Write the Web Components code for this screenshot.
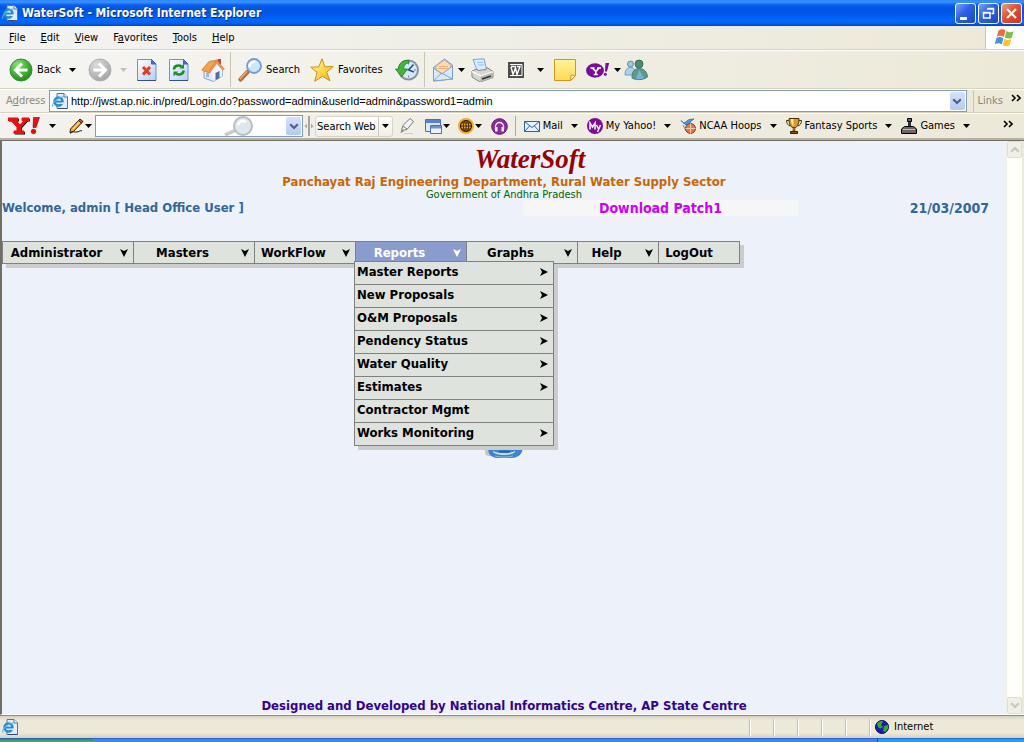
<!DOCTYPE html>
<html lang="en">
<head>
<meta charset="utf-8">
<title>WaterSoft - Microsoft Internet Explorer</title>
<style>
  html, body { margin: 0; height: 100%; }
  body { font: 11px/14px "DejaVu Sans Condensed", "DejaVu Sans", sans-serif; color: #000; background: #ece9d8; overflow: hidden; }
</style>
</head>
<body>
<browser-window></browser-window>
<script>
const PAGE_ICON = '<path d="M5 .5h7l3.500 3.500v11.500H5z" fill="#e4ecfb" stroke="#5670a8"/><path d="M12 .5V4h3.500" fill="#fff" stroke="#5670a8"/><path d="M6 15.500h9.500" stroke="#334a86"/><circle cx="6.500" cy="8.500" r="4" fill="#dff2ff" stroke="#2489d6" stroke-width="2.400"/><path d="M3 8.600h7.500" stroke="#2489d6" stroke-width="2"/><path d="M8.500 10.300h3.500" stroke="#e4ecfb" stroke-width="1.600"/><path d="M1 13.500C-.5 11 4 5 12.500 3.500" fill="none" stroke="#55b4ee" stroke-width="1.200"/>';
const ICONS = {
  page: [16, 16, PAGE_ICON],
  back: [24, 24, '<defs><radialGradient id="g" cx=".35" cy=".25" r=".9"><stop offset="0" stop-color="#8fe07a"/><stop offset=".5" stop-color="#3cb52f"/><stop offset="1" stop-color="#1d7d16"/></radialGradient></defs><circle cx="12" cy="12" r="11" fill="url(#g)" stroke="#2f8f2a"/><path d="M13 5.500 6.500 12l6.500 6.500M7 12h11.500" fill="none" stroke="#fff" stroke-width="3"/>'],
  forward: [24, 24, '<defs><radialGradient id="g" cx=".35" cy=".25" r=".9"><stop offset="0" stop-color="#dcdcdc"/><stop offset="1" stop-color="#9c9c9c"/></radialGradient></defs><circle cx="12" cy="12" r="11" fill="url(#g)" stroke="#b0b0b0"/><path d="m11 5.500 6.500 6.500-6.500 6.500M17 12H5.500" fill="none" stroke="#fff" stroke-width="3"/>'],
  stop: [20, 24, '<defs><linearGradient id="g" x2="1" y2="1"><stop offset="0" stop-color="#fff"/><stop offset="1" stop-color="#b4cdfa"/></linearGradient></defs><path d="M.5 1.500h14l4.500 4.500v16.500H.5z" fill="url(#g)" stroke="#6f8fd6"/><path d="M14.500 1.500V6H19z" fill="#3f6fc8" stroke="#3f66b4"/><path d="M.5 22.500H19" stroke="#34508f"/><path d="m6 9 7 7.500M13 9l-7 7.500" stroke="#ee3a12" stroke-width="3"/>'],
  refresh: [20, 24, '<defs><linearGradient id="g" x2="1" y2="1"><stop offset="0" stop-color="#fff"/><stop offset="1" stop-color="#b4cdfa"/></linearGradient></defs><path d="M.5 1.500h14l4.500 4.500v16.500H.5z" fill="url(#g)" stroke="#6f8fd6"/><path d="M14.500 1.500V6H19z" fill="#3f6fc8" stroke="#3f66b4"/><path d="M.5 22.500H19" stroke="#34508f"/><path d="M5 11.500c0-4 5-5 7.500-3M14.500 12.500c0 4-5 5-7.500 3" fill="none" stroke="#159021" stroke-width="2.600"/><path d="M10.500 10.500h4.500V5.500zM9 13.500H4.500v5z" fill="#159021"/>'],
  home: [24, 24, '<path d="M3 12v8l9.500 3.500 9-5.500V10L15 4z" fill="#dfeafc" stroke="#86a3cc"/><path d="M12.500 13.500v10l9-5.500v-7L17 6z" fill="#c4d7f6"/><path d="M16.500 1h3.500v6l-3.500-2z" fill="#c8452e"/><path d="M.8 12 8 3.500 16 2l-6.500 9-1.200 4z" fill="#f7a04a" stroke="#d47a2c" stroke-width=".8"/><path d="M16 2.500 23.500 11l-2 1.200L15.800 5.600 9.500 14.500l-1.200-.6z" fill="#ee9a48" stroke="#cc7a36" stroke-width=".5"/><path d="m10 14 5.800-8 5.200 6v6l-8.500 5z" fill="#eef4ff"/><path d="M14.500 15 18.500 13v7l-4 2.300z" fill="#4a6ea8"/><path d="M5 15h3v4H5z" fill="#9db8e5"/>'],
  search: [24, 24, '<path d="m2.500 21.500 7-7.500" stroke="#b26a36" stroke-width="4.200" stroke-linecap="round"/><path d="m2.300 20.700 6.500-7" stroke="#f0a878" stroke-width="1.500" stroke-linecap="round"/><circle cx="16" cy="8" r="7" fill="#c8e9fd" stroke="#7a9ad6" stroke-width="1.800"/><path d="M11.500 9c0-4 3-5.500 6-5" stroke="#fff" stroke-width="2.400" fill="none"/>'],
  star: [24, 24, '<defs><linearGradient id="g" x2="1" y2="1"><stop offset="0" stop-color="#fff6a8"/><stop offset=".6" stop-color="#ffd23a"/><stop offset="1" stop-color="#eea310"/></linearGradient></defs><path d="m12 .8 2.800 8 8.400-.3-6.500 5.700 3.300 8.600-7.500-4.500-7.800 5 2.400-9L.8 9.200l8-.3z" fill="url(#g)" stroke="#c98f1c" stroke-linejoin="round"/>'],
  history: [24, 24, '<circle cx="13.500" cy="12" r="9.500" fill="#d3e9fb" stroke="#8b949e" stroke-width="2"/><path d="M13.500 4.500v2M13.500 17.500v2M19 12h2" stroke="#6b87a8"/><path d="m18.500 6.500-5 5.500 5.500 2" fill="none" stroke="#2b4f86" stroke-width="1.600"/><path d="M14 2.500C8.500 1.500 3.500 5 3.500 11H.5l6 8 6-8H8.800c-.3-3.500 2-6 5.200-6z" fill="#3fb53a" stroke="#207a25" stroke-width=".8"/>'],
  envelope: [22, 24, '<path d="m1.500 9.500 11-8.500L20.500 7v14L1.500 23z" fill="#a9caf8" stroke="#7a9bdd"/><path d="M4 8 12.500 2l6 5v6l-7.500 3L4 12z" fill="#ffdcae" stroke="#e8aa66"/><path d="M7 8.500h9M6 10.500h10" stroke="#e5b27c"/><path d="m1.500 10 8.500 6 10.500-8v13L1.500 23z" fill="#d9eaff" stroke="#7a9bdd"/><path d="m1.500 23 8-8 11 6" fill="none" stroke="#7a9bdd"/>'],
  printer: [24, 24, '<path d="M3 1.500 14 .8l2.500 11-9 2z" fill="#d8ecff" stroke="#7aa3da"/><path d="M7 4.500h6M8 7h6" stroke="#9dbfe8"/><path d="m2 13 5-2 1 1.500 8-1 1-2 6 4v6l-13 4.500L2 19z" fill="#d6d6d4" stroke="#84847f"/><path d="m2 13.500 8.500 4.500L23 14" fill="none" stroke="#f8f8f6" stroke-width="1.500"/><path d="m10.500 18.500 12-4v5l-12 4.500z" fill="#b8b8b4"/><path d="m12 21 9-3" stroke="#333" stroke-width="1.500"/>'],
  word: [17, 18, '<path d="M0 1h16v16H0z" fill="#4b4b4b"/><path d="M3 5.500h4.500M3 6l2 7.500L7.500 7l1.500 6.500 3-8H9" fill="none" stroke="#fff" stroke-width="1.400"/><path d="M2 3.500h12v11H2" fill="none" stroke="#fff"/>'],
  note: [22, 24, '<defs><linearGradient id="g" x2="0" y2="1"><stop offset="0" stop-color="#fff29a"/><stop offset="1" stop-color="#ffd957"/></linearGradient></defs><path d="M.5 1.500h21v16l-4.500 5H.5z" fill="url(#g)" stroke="#cf9a1c"/><path d="m16.500 22.500.5-5.500 4.500.5z" fill="#fff6bd" stroke="#cf9a1c"/>'],
  messenger: [24, 18, '<ellipse cx="9" cy="9.500" rx="9" ry="7.200" fill="#7b0b9c"/><path d="M4.500 7h4M11 7h4M6.500 7l3.300 3.500L13 7M9.800 10v3.500M7.800 13.500h4" stroke="#fff" stroke-width="1.700" fill="none"/><path d="M19.500 2h3.700l-2.200 8.500h-2z" fill="#7b0b9c"/><circle cx="19.300" cy="13.300" r="1.500" fill="#7b0b9c"/>'],
  people: [24, 24, '<circle cx="6.500" cy="6" r="3" fill="#9fc8d9" stroke="#5c91aa"/><path d="M1 17c0-5 2-7.500 5.500-7.500S12 12 12 17z" fill="#a9d2e8" stroke="#6c9fbb"/><circle cx="15" cy="6" r="4" fill="#4d8a74" stroke="#39735d"/><path d="M8 20c0-6 2-9.500 7-9.500 5 0 8 3 8.500 8.500-4 3-11 3.500-15.500 1z" fill="#5b9d83" stroke="#45818a"/><path d="m15 12-3 9c4 .5 6 0 8-1z" fill="#7ab0de"/>'],
  flag: [22, 20, '<path d="M4.500 2.500c3-2 5-1.500 7 0L9.800 9C7.500 7.500 5 7.500 2.700 8.700z" fill="#f26a3a"/><path d="M12.500 3c2.500 1.500 4.500 1.500 7 .3L17.700 10c-2.500 1-4.500.7-7-.5z" fill="#7fc041"/><path d="M2.400 10c2.500-1.500 4.700-1 7 .3L7.800 16.500C5.500 15 3 15 .7 16.300z" fill="#4a8fe0"/><path d="M10.400 10.800c2.500 1.500 4.500 1.500 7 .3l-1.900 6.600c-2.500 1-4.500.7-6.800-.5z" fill="#fbc630"/>'],
  yahoo: [32, 20, '<path d="M0 2h10v2.500H8L12 9l4-4.500h-2V2h7v2.500h-2l-6 6.500v4h3v2.500H6V15h3v-4L3 4.500H0z" fill="#000" transform="translate(1 1)"/><path d="M0 2h10v2.500H8L12 9l4-4.500h-2V2h7v2.500h-2l-6 6.500v4h3v2.500H6V15h3v-4L3 4.500H0z" fill="#f00d0d" stroke="#f00d0d"/><path d="M25.500 1.500h6l-3.500 10h-3z" fill="#f00d0d" stroke="#400" stroke-width=".5"/><circle cx="25.500" cy="15.500" r="2.300" fill="#f00d0d" stroke="#400" stroke-width=".5"/>'],
  pencil: [16, 16, '<path d="m1.500 11 8-8.500 3 2.500-8 8.500-3.500 1z" fill="#f7b12a" stroke="#302000"/><path d="m9.500 2.500 1.500-1.500 3 2.500-1.500 1.500z" fill="#e05043" stroke="#302000"/><path d="M1 15.500c3-3 4-1 7-1.500s3-2 5-1" stroke="#111" fill="none"/><path d="m4 11 6.500-7" stroke="#ffe9a0"/>'],
  marker: [16, 18, '<path d="m2.500 13.500 1.500-5 7-7 3.500 3-6.500 8z" fill="#f4f4f4" stroke="#777"/><path d="m4 9 4 3" stroke="#777"/><path d="m1 16 2-2.500 2 1z" fill="#777"/><path d="M5 16.500h9" stroke="#ccc"/>'],
  windows: [17, 16, '<path d="M.5 1.500h15v12H.5z" fill="#dfe7fb" stroke="#506cb2"/><path d="M1 2h14v3H1z" fill="#5f80d0"/><path d="M5.500 7.500h11v8h-11z" fill="#edf2ff" stroke="#506cb2"/><path d="M6 8h10v2.500H6z" fill="#6f8fd8"/>'],
  globe: [16, 16, '<circle cx="8" cy="8" r="8" fill="#f3ae1c"/><circle cx="8" cy="8" r="5.500" fill="none" stroke="#2e1d00" stroke-width="1.200"/><path d="M8 2v12M2.500 8h11M3.500 5h9M3.500 11h9" stroke="#2e1d00" stroke-width=".9"/><ellipse cx="8" cy="8" rx="2.700" ry="5.500" fill="none" stroke="#2e1d00" stroke-width=".9"/>'],
  music: [17, 17, '<circle cx="8.500" cy="8.500" r="7.800" fill="#8a2a9e" stroke="#5d1670"/><path d="M4.500 11V8.500a4 4 0 0 1 8 0V11" fill="none" stroke="#fff" stroke-width="1.300"/><path d="M4 9h2.500v4.500H4zM10.500 9H13v4.500h-2.500z" fill="#fff"/>'],
  mail: [16, 16, '<path d="M.5 3.500h15v10H.5z" fill="#e6f2ff" stroke="#2c62a8"/><path d="m.5 3.500 7.500 6 7.500-6M.5 13.500l5-5.500M15.500 13.500l-5-5.500" fill="none" stroke="#2c62a8"/>'],
  my: [16, 16, '<circle cx="8" cy="8" r="8" fill="#7b0b9c"/><path d="M3 11.500V5l2.500 4L8 5v6.500M9.500 7l2 4M13.500 7l-3 7" fill="none" stroke="#fff" stroke-width="1.500"/>'],
  hoops: [16, 16, '<path d="M1 2.500 4 5l5-3.500 5-.5-4 3 1 3-6-.5z" fill="#4a97e0" stroke="#2161a8" stroke-width=".7"/><path d="m3 7 3 6" stroke="#6a8fb8"/><circle cx="10.500" cy="10.500" r="5" fill="#e07a45" stroke="#8f3a16"/><path d="M5.500 10.500h10M10.500 5.500v10" stroke="#f5c7ab"/>'],
  trophy: [16, 16, '<path d="M3.500 2.500h-3c0 3 1.500 5 4 5.500M12.500 2.500h3c0 3-1.500 5-4 5.500" fill="none" stroke="#4a3205"/><path d="M3 .5h10c0 5-1 7.500-3.500 9h-3C4 8 3 5.500 3 .5z" fill="#d59b25" stroke="#4a3205"/><path d="M5 1c0 4 1 6 2.500 7.500V1z" fill="#ffe89b"/><path d="M7 9.500h2V13H7z" fill="#b77b12" stroke="#4a3205" stroke-width=".5"/><path d="M4.500 13.500h7v2h-7z" fill="#8c5a14" stroke="#2e1c00"/>'],
  joystick: [16, 16, '<path d="M7 1h3v8H7z" fill="#333"/><path d="M6.500.500h4v3h-4z" fill="#666" stroke="#000"/><path d="m.5 11 3-2.500h9l3 2.500v4.500H.5z" fill="#666" stroke="#000"/><path d="M2 11.500h12" stroke="#bbb"/><path d="M6 13.500h2M10 13.500h2" stroke="#f33" stroke-width="1.500"/>'],
  lens: [30, 20, '<path d="m1 19 10-4.500" stroke="#c9c9c9" stroke-width="3.500"/><circle cx="19" cy="10" r="9" fill="#dde8ee" stroke="#b9bdc0" stroke-width="2"/><path d="M14 9c1-4 5-5 8-3" stroke="#fff" stroke-width="2.400" fill="none"/>'],
  grip: [10, 20, '<path d="M5 0v20" stroke="#8c8a80" stroke-width="1.500"/><path d="M3 7.500v5L.5 10zM7 7.500v5L9.500 10z" fill="#aaa89c"/>'],
  earth: [14, 14, '<circle cx="7" cy="7" r="6.500" fill="#1717c8" stroke="#101040"/><path d="M2 4c2-3 5-3.500 6-2.500L6 5l2 2-3 1.500L3 7zM9 6l4-1 .3 3-2.800 4L8 11z" fill="#2fae2f"/>'],
  water: [38, 22, '<path d="M0 12h12v8H5c-3 0-5-1-5-4z" fill="#c3c7c0"/><path d="M3 12h35c-1 6-4 9-10 10H11c-5-1-8-4-8-10z" fill="#3d84cc"/><path d="M8 15c5 3 17 3 22 0v1c-4 4-18 4-22 0z" fill="#d7e7f3"/><path d="M14 15.500h11" stroke="#2c62a8" stroke-width="2"/><path d="M10 20c5 1.500 13 1.500 18 0" fill="none" stroke="#8fbbe6"/>'],
  caret: [7, 4, '<path d="M0 0h7L3.500 4z" fill="currentColor"/>'],
  chevrons: [10, 8, '<path d="m1 1 3 3-3 3M6 1l3 3-3 3" fill="none" stroke="currentColor" stroke-width="1.600"/>'],
  chevron: [10, 7, '<path d="m1.200 1.200 3.800 3.800 3.800-3.800" fill="none" stroke="currentColor" stroke-width="2.200"/>'],
  up: [10, 7, '<path d="m1.200 5.800 3.800-3.800 3.800 3.800" fill="none" stroke="currentColor" stroke-width="2.200"/>'],
  down: [8, 8, '<path d="m0 0 4 2 4-2-4 8z" fill="currentColor"/>'],
  right: [8, 8, '<path d="m0 0 8 4-8 4 2-4z" fill="currentColor"/>'],
  minimize: [19, 19, '<path d="M4 13h7v3H4z" fill="#fff"/>'],
  restore: [19, 19, '<path d="M8.500 4.500h6v5h-2M8 5h7" fill="none" stroke="#fff" stroke-width="1.500"/><path d="M4.500 8.500h6.500v5.500H4.500zM4 9h7" fill="none" stroke="#fff" stroke-width="1.500"/>'],
  close: [19, 19, '<path d="m5 5 9 9M14 5l-9 9" stroke="#fff" stroke-width="2.200"/>']
};
const RESET = ':host{box-sizing:border-box}*{box-sizing:border-box}button{font:inherit;color:inherit;background:none;border:0;margin:0;padding:0;text-align:left;white-space:nowrap}';
const define = (name, markup) => customElements.define(name, class extends HTMLElement {
  connectedCallback() {
    if (this.shadowRoot) return;
    const template = document.createElement('template');
    template.innerHTML = `<style>${RESET}</style>` + (typeof markup === 'function' ? markup(this) : markup);
    this.attachShadow({ mode: 'open' }).append(template.content.cloneNode(true));
  }
});

define('ui-icon', el => {
  const [w, h, art] = ICONS[el.getAttribute('name')];
  return `<style>:host{display:block;flex:none}svg{display:block}</style><svg width="${w}" height="${h}" viewBox="0 0 ${w} ${h}" aria-hidden="true">${art}</svg>`;
});

define('window-button', el => `<style>
  :host{display:block}
  button{display:block;padding:0;border:1px solid #fff;border-radius:3px;background:linear-gradient(135deg,#7ba0f5,#2c60e4 45%,#1a48cc)}
  :host([kind=close]) button{background:linear-gradient(135deg,#f0a088,#e0512c 45%,#c8371a)}
  </style><button aria-label="${el.getAttribute('kind')}"><ui-icon name="${el.getAttribute('kind')}"></ui-icon></button>`);

define('title-bar', `<style>
  :host{display:flex;align-items:center;height:26px;padding:0 2px;gap:4px;color:#fff;
    background:linear-gradient(#2a86fb,#3b94ff 2px,#0a5ef0 5px,#0054e3 9px,#0058ea 14px,#0068ff 20px,#0064fa 23px,#0041c8)}
  h1{flex:1;margin:0;font:bold 12px/16px "DejaVu Sans Condensed","DejaVu Sans",sans-serif;text-shadow:1px 1px #0a2a86}
  div{display:flex;gap:2px}
  </style><ui-icon name="page"></ui-icon><h1><slot></slot></h1>
  <div><window-button kind="minimize"></window-button><window-button kind="restore"></window-button><window-button kind="close"></window-button></div>`);

define('menu-strip', `<style>
  :host{display:flex;height:24px;border-bottom:1px solid #d6d2bd;background:linear-gradient(90deg,#f3f3f1,#ece9d8)}
  nav{flex:1;display:flex;align-items:center;gap:15px;padding-left:9px}
  span{display:flex;align-items:center;justify-content:center;width:39px;border-left:1px solid #c9c5b0;background:#fff}
  </style><nav><button><u>F</u>ile</button><button><u>E</u>dit</button><button><u>V</u>iew</button><button>F<u>a</u>vorites</button><button><u>T</u>ools</button><button><u>H</u>elp</button></nav>
  <span><ui-icon name="flag"></ui-icon></span>`);

/* A toolbar command: icon, optional label, optional drop-down caret. */
define('tool-button', el => `<style>
  :host{display:block;flex:none;height:100%}
  button{display:flex;align-items:center;gap:4px;width:100%;height:100%;padding-left:5px}
  .caret{margin-left:var(--caret-gap,0px)}
  :host([off]) .caret{color:#c4c2b8}
  </style><button aria-label="${el.getAttribute('icon')}"><ui-icon name="${el.getAttribute('icon')}"></ui-icon><slot></slot>${el.hasAttribute('menu') ? '<ui-icon class="caret" name="caret"></ui-icon>' : ''}</button>`);

define('tool-bar', `<style>
  :host{display:flex;align-items:center;height:39px;padding-left:4px;border-top:1px solid #fff;border-bottom:1px solid #d6d2bd;background:linear-gradient(90deg,#f5f5f3,#ece9d8)}
  i{flex:none;width:1px;height:35px;margin:0 2px;background:#c9c5b0}
  .s{width:32px}.l{width:38px}
  .back{width:79px;--caret-gap:4px}.forward{width:49px;--caret-gap:4px}.word{width:46px;--caret-gap:8px}.search{width:72px}.fav{width:85px}
  </style>
  <tool-button class="back" icon="back" menu>Back</tool-button>
  <tool-button class="forward" icon="forward" menu off></tool-button>
  <tool-button class="s" icon="stop"></tool-button>
  <tool-button class="s" icon="refresh"></tool-button>
  <tool-button class="s" icon="home"></tool-button><i></i>
  <tool-button class="search" icon="search">Search</tool-button>
  <tool-button class="fav" icon="star">Favorites</tool-button>
  <tool-button class="s" icon="history"></tool-button><i></i>
  <tool-button class="l" icon="envelope" menu></tool-button>
  <tool-button class="l" icon="printer"></tool-button>
  <tool-button class="word" icon="word" menu></tool-button>
  <tool-button class="s" icon="note"></tool-button>
  <tool-button class="l" icon="messenger" menu></tool-button>
  <tool-button class="s" icon="people"></tool-button>`);

const DROP = '.drop{display:flex;flex:none;align-items:center;justify-content:center;width:15px;height:18px;border-radius:2px;background:linear-gradient(#d5e2fd,#b5c9f5);color:#4d6185}';

define('address-bar', `<style>${DROP}
  :host{display:flex;align-items:center;height:24px;padding:0 3px 0 6px;border-top:1px solid #fff;border-bottom:1px solid #d6d2bd;background:linear-gradient(90deg,#f3f2ee,#ece9d8)}
  label,.links{color:#8a8879}
  label{width:43px}
  .box{flex:1;display:flex;align-items:center;gap:3px;height:22px;padding:0 1px 0 2px;border:1px solid #7f9db9;background:#fff}
  input{flex:1;min-width:0;height:18px;padding:0;border:0;outline:0;background:none;font:11px "Liberation Sans",sans-serif;color:#000}
  .links{display:flex;gap:8px;height:22px;margin-left:6px;padding:4px 0 0 4px;border-left:1px solid #c9c5b0}
  .links ui-icon{color:#000}
  </style><label for="url">A<u>d</u>dress</label>
  <div class="box"><ui-icon name="page"></ui-icon><input id="url" value="http://jwst.ap.nic.in/pred/Login.do?password=admin&amp;userId=admin&amp;password1=admin"><button class="drop" aria-label="History"><ui-icon name="chevron"></ui-icon></button></div>
  <button class="links">Links<ui-icon name="chevrons"></ui-icon></button>`);

/* A bookmark on the Yahoo bar. */
define('quick-link', el => `<style>
  :host{display:block;flex:none}
  button{display:flex;align-items:center;gap:3px}
  .caret{margin-left:5px}
  </style><button><ui-icon name="${el.getAttribute('icon')}"></ui-icon><slot></slot><ui-icon class="caret" name="caret"></ui-icon></button>`);

define('yahoo-bar', `<style>${DROP}
  :host{display:flex;align-items:center;height:27px;padding-right:11px;border-top:1px solid #fff;border-bottom:2px solid #b5b2a2;background:linear-gradient(90deg,#f3f2ee,#ece9d8)}
  button{display:flex;align-items:center;flex:none}
  .logo{gap:9px;width:61px;margin-left:8px}
  .edit{width:26px}
  .find{display:flex;align-items:center;width:208px;height:22px;padding-right:1px;border:1px solid #7f9db9;background:#fff;overflow:hidden}
  .find input{flex:1;min-width:0;border:0;outline:0;background:none;font:inherit}
  .find ui-icon[name=lens]{margin-right:32px}
  .grip{margin:0 1px}
  .go{height:21px;border:1px solid #d8d4c4;border-radius:3px;background:linear-gradient(#fff,#f1efe6)}
  .go span{padding:3px 2px 2px 1px;border-right:1px solid #d0ccba}
  .go ui-icon{margin:0 3px}
  .tools{display:flex;align-items:center;margin-left:6px}
  .tools button{gap:1px;width:33px}
  .tools button:first-child{width:26px}
  .tools button:last-child{width:24px}
  .sep{flex:none;width:1px;height:20px;margin-right:8px;background:#aca899}
  .links{flex:1;display:flex;gap:9px}
  .more{padding-bottom:5px}
  </style>
  <button class="logo" aria-label="Yahoo"><ui-icon name="yahoo"></ui-icon><ui-icon name="caret"></ui-icon></button>
  <button class="edit" aria-label="Edit"><ui-icon name="pencil"></ui-icon><ui-icon name="caret"></ui-icon></button>
  <div class="find"><input aria-label="Search the Web"><ui-icon name="lens"></ui-icon><button class="drop" aria-label="Recent searches"><ui-icon name="chevron"></ui-icon></button></div>
  <ui-icon class="grip" name="grip"></ui-icon>
  <button class="go"><span>Search Web</span><ui-icon name="caret"></ui-icon></button>
  <div class="tools"><button aria-label="Highlight"><ui-icon name="marker"></ui-icon></button><button aria-label="Pop-ups"><ui-icon name="windows"></ui-icon><ui-icon name="caret"></ui-icon></button><button aria-label="Protection"><ui-icon name="globe"></ui-icon><ui-icon name="caret"></ui-icon></button><button aria-label="Music"><ui-icon name="music"></ui-icon></button></div>
  <i class="sep"></i>
  <div class="links"><quick-link icon="mail">Mail</quick-link><quick-link icon="my">My Yahoo!</quick-link><quick-link icon="hoops">NCAA Hoops</quick-link><quick-link icon="trophy">Fantasy Sports</quick-link><quick-link icon="joystick">Games</quick-link></div>
  <button class="more" aria-label="More"><ui-icon name="chevrons"></ui-icon></button>`);

define('menu-tab', el => `<style>
  :host{display:block;position:relative;border-right:1px solid #808080;background:#dee3de}
  :host([open]){background:#8a9ccd;color:#fff}
  .tab{display:flex;align-items:center;width:100%;height:21px;padding-right:5px}
  .tab span{flex:1;padding-right:10px;text-align:center}
  :host([plain]) .tab{padding-right:10px}
  </style><button class="tab"><span>${el.getAttribute('label')}</span>${el.hasAttribute('plain') ? '' : '<ui-icon name="down"></ui-icon>'}</button><slot></slot>`);

define('drop-menu', `<style>
  :host{display:block;position:absolute;z-index:2;top:19px;left:-2px;width:200px;border:1px solid #808080;border-bottom:0;color:#000;background:#dee3de;box-shadow:4px 4px #ccc}
  </style><slot></slot>`);

define('menu-row', el => `<style>
  :host{display:block;border-bottom:1px solid #808080}
  button{display:flex;align-items:center;justify-content:space-between;width:100%;height:22px;padding:0 5px 3px 2px}
  </style><button><slot></slot>${el.hasAttribute('leaf') ? '' : '<ui-icon name="right"></ui-icon>'}</button>`);

define('site-menu', `<style>
  :host{display:grid;grid-template-columns:131px 121px 101px 111px 111px 81px 81px;width:max-content;border:1px solid #808080;border-right:0;box-shadow:4px 4px #ccc}
  </style><slot></slot>`);

define('site-page', `<style>
  :host{display:flex;flex-direction:column;flex:1;min-width:0;background:#ecf1fa;font-size:13px;line-height:16px;font-weight:bold}
  header{text-align:center}
  h1{margin:0;padding:3px 0 0 52px;font:italic bold 27px/30px "Liberation Serif",serif;color:#990000}
  h2{margin:0;font-size:13px;line-height:16px;color:#cc6600}
  .gov{margin:0;font-size:11px;line-height:10px;font-weight:normal;color:#006600}
  .row{display:grid;grid-template-columns:521fr 275fr 208fr;margin-bottom:25px;color:#336699}
  .row a{text-align:center;text-decoration:none;font-size:14px;color:#cc00ff;background:#f6f6f6}
  .row time{padding-right:17px;text-align:right;font-size:14px}
  main{flex:1}
  .pic{display:flex;justify-content:center;padding-top:172px}
  footer{text-align:center;color:#330099}
  </style>
  <header><h1>WaterSoft</h1><h2>Panchayat Raj Engineering Department, Rural Water Supply Sector</h2><p class="gov">Government of Andhra Pradesh</p></header>
  <div class="row"><span>Welcome, admin [ Head Office User ]</span><a href="#patch">Download Patch1</a><time>21/03/2007</time></div>
  <main><site-menu>
    <menu-tab label="Administrator"></menu-tab><menu-tab label="Masters"></menu-tab><menu-tab label="WorkFlow"></menu-tab>
    <menu-tab label="Reports" open><drop-menu><menu-row>Master Reports</menu-row><menu-row>New Proposals</menu-row><menu-row>O&amp;M Proposals</menu-row><menu-row>Pendency Status</menu-row><menu-row>Water Quality</menu-row><menu-row>Estimates</menu-row><menu-row leaf>Contractor Mgmt</menu-row><menu-row>Works Monitoring</menu-row></drop-menu></menu-tab>
    <menu-tab label="Graphs"></menu-tab><menu-tab label="Help"></menu-tab><menu-tab label="LogOut" plain></menu-tab>
  </site-menu><div class="pic"><ui-icon name="water"></ui-icon></div></main>
  <footer>Designed and Developed by National Informatics Centre, AP State Centre</footer>`);

define('scroll-rail', `<style>
  :host{display:flex;flex-direction:column;justify-content:space-between;flex:none;width:18px;border-left:1px solid #f0efe6;border-right:2px solid #ece9d8;background:#fefefb}
  button{display:flex;align-items:center;justify-content:center;height:17px;border:1px solid #e0ded2;border-radius:2px;background:#f0efe8;color:#c9c7ba}
  </style><button disabled aria-label="Scroll up"><ui-icon name="up"></ui-icon></button><button disabled aria-label="Scroll down"><ui-icon name="chevron"></ui-icon></button>`);

define('status-bar', `<style>
  :host{display:flex;align-items:center;height:23px;padding-left:2px;border-top:1px solid #8e8c80;background:linear-gradient(#d3d0bf,#ece9d8 4px,#ece9d8 17px,#d5d1bb)}
  .fill{flex:1}
  i{width:24px;height:17px;border-left:1px solid #c4c1ae;box-shadow:inset 1px 0 #fff}
  p{display:flex;align-items:center;gap:5px;width:155px;height:17px;margin:0;padding-left:5px;border-left:1px solid #c4c1ae;box-shadow:inset 1px 0 #fff}
  </style><ui-icon name="page"></ui-icon><span class="fill"></span><i></i><i></i><i></i><i></i><i></i><p><ui-icon name="earth"></ui-icon>Internet</p>`);

define('task-strip', `<style>
  :host{display:flex;height:4px;border-top:1px solid #2a62d0;background:#3a86ee}
  .start{width:94px;background:linear-gradient(#3c8a3c,#5bb05b);border-radius:0 3px 0 0}
  .tray{width:147px;margin-left:auto;background:#13a7ee;border-left:1px solid #0a3f9c}
  </style><span class="start"></span><span class="tray"></span>`);

define('browser-window', `<style>
  :host{display:flex;flex-direction:column;height:100vh}
  .view{flex:1;display:flex;min-height:0;border:solid #716f64;border-width:1px 0 0 2px;border-bottom:1px solid #fff}
  </style>
  <title-bar>WaterSoft - Microsoft Internet Explorer</title-bar><menu-strip></menu-strip><tool-bar></tool-bar><address-bar></address-bar><yahoo-bar></yahoo-bar>
  <div class="view"><site-page></site-page><scroll-rail></scroll-rail></div><status-bar></status-bar><task-strip></task-strip>`);
</script>
</body>
</html>
